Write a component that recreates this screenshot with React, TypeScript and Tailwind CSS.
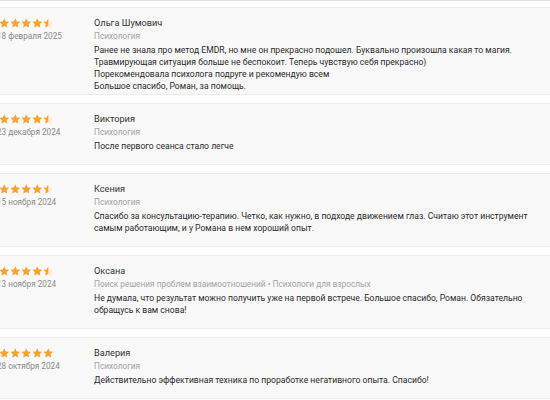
import React from "react";

type Review = {
  name: string;
  date: string;
  category: string;
  lines: string[];
  rating: number;
};

const reviews: Review[] = [
  {
    name: "Ольга Шумович",
    date: "18 февраля 2025",
    category: "Психология",
    rating: 4.5,
    lines: [
      "Ранее не знала про метод EMDR, но мне он прекрасно подошел. Буквально произошла какая то магия.",
      "Травмирующая ситуация больше не беспокоит. Теперь чувствую себя прекрасно)",
      "Порекомендовала психолога подруге и рекомендую всем",
      "Большое спасибо, Роман, за помощь.",
    ],
  },
  {
    name: "Виктория",
    date: "23 декабря 2024",
    category: "Психология",
    rating: 4.5,
    lines: ["После первого сеанса стало легче"],
  },
  {
    name: "Ксения",
    date: "15 ноября 2024",
    category: "Психология",
    rating: 4.5,
    lines: [
      "Спасибо за консультацию-терапию. Четко, как нужно, в подходе движением глаз. Считаю этот инструмент",
      "самым работающим, и у Романа в нем хороший опыт.",
    ],
  },
  {
    name: "Оксана",
    date: "13 ноября 2024",
    category: "Поиск решения проблем взаимоотношений • Психологи для взрослых",
    rating: 4.5,
    lines: [
      "Не думала, что результат можно получить уже на первой встрече. Большое спасибо, Роман. Обязательно",
      "обращусь к вам снова!",
    ],
  },
  {
    name: "Валерия",
    date: "28 октября 2024",
    category: "Психология",
    rating: 5,
    lines: ["Действительно эффективная техника по проработке негативного опыта. Спасибо!"],
  },
];

const STAR =
  "M12 0.8l3.4 7 7.7 1-5.6 5.4 1.4 7.7L12 18.2l-6.9 3.7 1.4-7.7L0.9 8.8l7.7-1z";

function Star({ half, id }: { half?: boolean; id?: string }) {
  return (
    <svg width="10.5" height="10.5" viewBox="0 0 24 24" className="shrink-0">
      {half ? (
        <>
          <defs>
            <clipPath id={id}>
              <rect x="0" y="0" width="12" height="24" />
            </clipPath>
          </defs>
          <path d={STAR} fill="#fde9cc" />
          <path d={STAR} fill="#f7a233" clipPath={`url(#${id})`} />
        </>
      ) : (
        <path d={STAR} fill="#f7a233" />
      )}
    </svg>
  );
}

function Stars({ rating, idx }: { rating: number; idx: number }) {
  const full = Math.floor(rating);
  const half = rating - full >= 0.5;
  return (
    <div className="flex items-center gap-[0.5px]">
      {Array.from({ length: full }).map((_, i) => (
        <Star key={i} />
      ))}
      {half && <Star half id={`half-${idx}`} />}
    </div>
  );
}

export default function App() {
  return (
    <div
      className="w-[550px] h-[400px] overflow-hidden bg-white"
      style={{ fontFamily: "Roboto, 'Noto Sans', sans-serif" }}
    >
      <div className="-mt-[3px] h-[4px] border-b border-[#e3e3e3] bg-[#f9f9f9]" />
      <div className="mt-[6px] flex flex-col gap-[8px]">
        {reviews.map((r, i) => (
          <div
            key={i}
            className={`flex border-y border-[#ececec] bg-[#f9f9f9] pt-[8px] ${
              i === 0 ? "pb-[2px]" : "pb-[12px]"
            }`}
          >
            <div className="-ml-[1px] w-[95px] shrink-0 pt-[2px]">
              <Stars rating={r.rating} idx={i} />
              <div className="-ml-[2px] mt-[1px] text-[8.2px] leading-[12px] text-[#8a8a8a]">
                {r.date}
              </div>
            </div>
            <div className="flex-1 min-w-0">
              <div className="text-[9.2px] leading-[14px] text-[#333]">{r.name}</div>
              <div className="text-[8.3px] leading-[12px] text-[#a3a3a3]">{r.category}</div>
              <div className="mt-[2px] text-[8.6px] leading-[12px] text-[#2a2a2a] whitespace-nowrap">
                {r.lines.map((l, j) => (
                  <div key={j}>{l}</div>
                ))}
              </div>
            </div>
          </div>
        ))}
      </div>
    </div>
  );
}
